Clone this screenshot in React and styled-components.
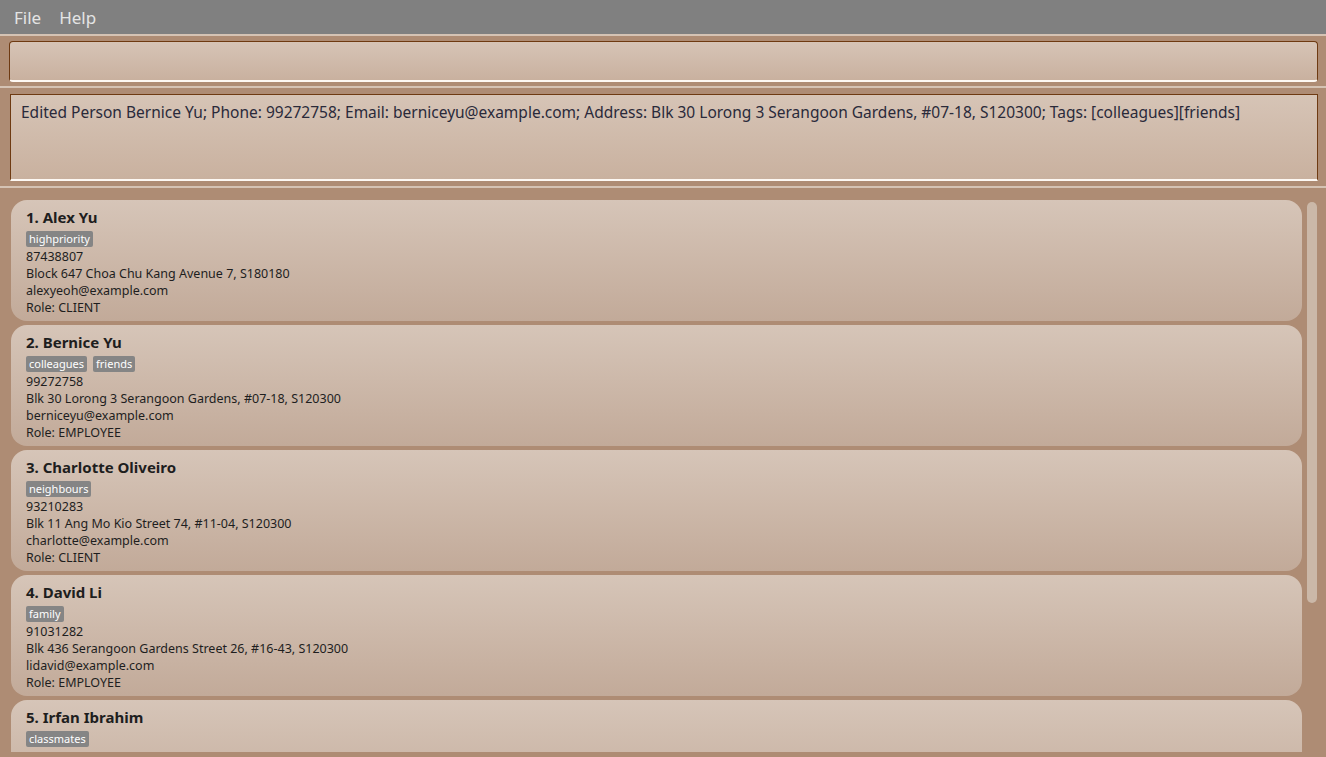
import React from 'react';
import styled, { createGlobalStyle } from 'styled-components';

const GlobalStyle = createGlobalStyle`
  html, body {
    margin: 0;
    padding: 0;
    height: 100%;
    overflow: hidden;
    background: #ae8c74;
  }
  #root {
    height: 100%;
  }
`

const Window = styled.div`
  display: flex;
  flex-direction: column;
  height: 757px;
  font-family: 'Noto Sans', 'Open Sans', sans-serif;
  background: #ae8c74;
`

const MenuBar = styled.div`
  display: flex;
  align-items: center;
  gap: 18px;
  height: 34px;
  padding: 0 14px;
  background: #808080;
  border-bottom: 2px solid #d5c3b4;
`

const MenuItem = styled.span`
  color: #e4e4e4;
  font-size: 17px;
`

const Section = styled.div`
  padding: ${props => props.pad || '5px 8px 5px 9px'};
  border-bottom: 2px solid #d5c3b4;
`

const Box = styled.div`
  box-sizing: border-box;
  height: ${props => props.h}px;
  border: 1px solid #6e3a12;
  border-bottom: 2px solid #fdf8f3;
  border-radius: ${props => props.r || 0}px;
  background: linear-gradient(#d6c4b6, #c9b19f);
  padding: 6px 10px;
  color: #2a2a3a;
  font-size: 15.5px;
  white-space: nowrap;
  overflow: hidden;
`

const List = styled.div`
  flex: 1;
  min-height: 0;
  display: flex;
  gap: 5px;
  padding: 12px 9px 5px 11px;
`

const Cards = styled.div`
  flex: 1;
  display: flex;
  flex-direction: column;
  gap: 4px;
  overflow: hidden;
`

const Card = styled.div`
  flex: none;
  box-sizing: border-box;
  height: 121px;
  padding: 7px 15px;
  border-radius: 16px;
  background: linear-gradient(#d6c5b8, #c2aa99);
  color: #1e1e1e;
`

const Name = styled.div`
  font-size: 15px;
  font-weight: 700;
  line-height: 20px;
`

const Tags = styled.div`
  display: flex;
  gap: 6px;
  margin: 4px 0 1px;
`

const Tag = styled.span`
  background: #858585;
  color: #fff;
  font-size: 11px;
  line-height: 16px;
  padding: 0 3px;
  border-radius: 2px;
`

const Line = styled.div`
  font-size: 12.5px;
  line-height: 17px;
`

const Scrollbar = styled.div`
  width: 10px;
  flex: none;
  padding-top: 2px;
`

const Thumb = styled.div`
  height: 401px;
  border-radius: 5px;
  background: #cbb8a8;
`

const persons = [
  { name: 'Alex Yu', tags: ['highpriority'], phone: '87438807', address: 'Block 647 Choa Chu Kang Avenue 7, S180180', email: 'alexyeoh@example.com', role: 'CLIENT' },
  { name: 'Bernice Yu', tags: ['colleagues', 'friends'], phone: '99272758', address: 'Blk 30 Lorong 3 Serangoon Gardens, #07-18, S120300', email: 'berniceyu@example.com', role: 'EMPLOYEE' },
  { name: 'Charlotte Oliveiro', tags: ['neighbours'], phone: '93210283', address: 'Blk 11 Ang Mo Kio Street 74, #11-04, S120300', email: 'charlotte@example.com', role: 'CLIENT' },
  { name: 'David Li', tags: ['family'], phone: '91031282', address: 'Blk 436 Serangoon Gardens Street 26, #16-43, S120300', email: 'lidavid@example.com', role: 'EMPLOYEE' },
  { name: 'Irfan Ibrahim', tags: ['classmates'] },
];

const App = () => (
  <Window>
    <GlobalStyle />
    <MenuBar>
      <MenuItem>File</MenuItem>
      <MenuItem>Help</MenuItem>
    </MenuBar>
    <Section pad="5px 8px 4px 9px">
      <Box h={41} r={4} />
    </Section>
    <Section pad="6px 8px 5px 10px">
      <Box h={87}>
        Edited Person Bernice Yu; Phone: 99272758; Email: berniceyu@example.com; Address: Blk 30 Lorong 3 Serangoon Gardens, #07-18, S120300; Tags: [colleagues][friends]
      </Box>
    </Section>
    <List>
      <Cards>
        {persons.map((p, i) => (
          <Card key={p.name}>
            <Name>{i + 1}. {p.name}</Name>
            <Tags>
              {p.tags.map(t => <Tag key={t}>{t}</Tag>)}
            </Tags>
            {p.phone && <Line>{p.phone}</Line>}
            {p.address && <Line>{p.address}</Line>}
            {p.email && <Line>{p.email}</Line>}
            {p.role && <Line>Role: {p.role}</Line>}
          </Card>
        ))}
      </Cards>
      <Scrollbar>
        <Thumb />
      </Scrollbar>
    </List>
  </Window>
);

export default App;
